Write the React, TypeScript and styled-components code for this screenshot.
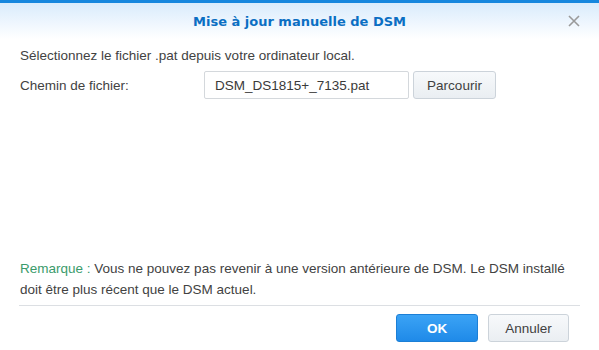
import React from 'react';
import styled, {createGlobalStyle} from 'styled-components';

const GlobalStyle = createGlobalStyle`
  html, body {
    margin: 0;
    padding: 0;
    background: #ffffff;
  }
  body {
    font-family: "Liberation Sans", Arial, sans-serif;
  }
`

const Dialog = styled.div`
  width: 599px;
  height: 350px;
  display: flex;
  flex-direction: column;
  background: #ffffff;
  border-top: 3px solid #1687de;
  box-sizing: border-box;
  overflow: hidden;
`

const Header = styled.div`
  height: 36px;
  display: flex;
  align-items: center;
  justify-content: center;
  position: relative;
  background: linear-gradient(to bottom, #d9ecfc 0%, #eef6fe 55%, #ffffff 100%);
`

const Title = styled.div`
  font-family: "DejaVu Sans", Verdana, sans-serif;
  font-weight: bold;
  font-size: 13px;
  color: #0b6fc3;
  margin-top: 1px;
`

const CloseButton = styled.button`
  position: absolute;
  right: 19px;
  top: 12px;
  width: 12px;
  height: 12px;
  padding: 0;
  border: none;
  background: transparent;
  display: flex;
`

const Body = styled.div`
  flex: 1;
  padding: 7px 20px 0 20px;
  display: flex;
  flex-direction: column;
`

const Intro = styled.div`
  font-size: 13.5px;
  line-height: 20px;
  color: #424242;
`

const FieldRow = styled.div`
  display: flex;
  align-items: center;
  margin-top: 5px;
`

const FieldLabel = styled.label`
  width: 184px;
  font-size: 13.5px;
  color: #424242;
`

const TextInput = styled.div`
  width: 205px;
  height: 28px;
  box-sizing: border-box;
  border: 1px solid #d4d8dc;
  border-radius: 2px;
  padding: 0 10px;
  display: flex;
  align-items: center;
  font-size: 13.5px;
  color: #3a3a3a;
`

const Button = styled.button<{ $primary?: boolean; $width: number }>`
  width: ${(p) => p.$width}px;
  height: 28px;
  box-sizing: border-box;
  border-radius: 3px;
  font-family: "Liberation Sans", Arial, sans-serif;
  font-size: 13.5px;
  cursor: pointer;
  border: 1px solid ${(p) => (p.$primary ? '#1c7fd6' : '#ccd3da')};
  background: ${(p) => (p.$primary
          ? 'linear-gradient(to bottom, #3ba3f5, #1f8ae8)'
          : 'linear-gradient(to bottom, #f7f9fb, #eaeef2)')};
  color: ${(p) => (p.$primary ? '#ffffff' : '#3f3f3f')};
  font-weight: ${(p) => (p.$primary ? 'bold' : 'normal')};
`

const BrowseButton = styled(Button)`
  margin-left: 4px;
`

const Note = styled.div`
  margin-top: auto;
  font-size: 13.5px;
  line-height: 21px;
  color: #424242;
`

const NoteLabel = styled.span`
  color: #3a9b6b;
`

const Footer = styled.div`
  margin: 5px 19px 0 19px;
  border-top: 1px solid #dcdfe3;
  padding: 8px 11px 8px 0;
  display: flex;
  justify-content: flex-end;
  gap: 10px;
`

export default function App() {
    return (
        <>
            <GlobalStyle/>
            <Dialog>
                <Header>
                    <Title>Mise à jour manuelle de DSM</Title>
                    <CloseButton aria-label="Fermer">
                        <svg width="12" height="12" viewBox="0 0 12 12">
                            <path d="M1 1 L11 11 M11 1 L1 11" stroke="#9a9a9a" strokeWidth="1.6"/>
                        </svg>
                    </CloseButton>
                </Header>
                <Body>
                    <Intro>Sélectionnez le fichier .pat depuis votre ordinateur local.</Intro>
                    <FieldRow>
                        <FieldLabel>Chemin de fichier:</FieldLabel>
                        <TextInput>DSM_DS1815+_7135.pat</TextInput>
                        <BrowseButton $width={83}>Parcourir</BrowseButton>
                    </FieldRow>
                    <Note>
                        <NoteLabel>Remarque :</NoteLabel> Vous ne pouvez pas revenir à une version antérieure de DSM. Le DSM installé doit être plus récent que le DSM actuel.
                    </Note>
                </Body>
                <Footer>
                    <Button $primary $width={82}>OK</Button>
                    <Button $width={81}>Annuler</Button>
                </Footer>
            </Dialog>
        </>
    )
}
